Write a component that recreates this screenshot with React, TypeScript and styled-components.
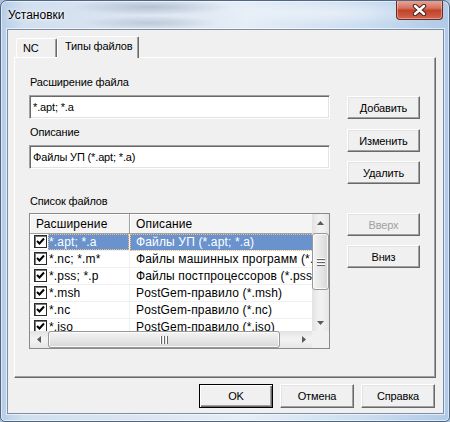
import styled, { createGlobalStyle } from "styled-components";

const GlobalStyle = createGlobalStyle`
  html, body {
    margin: 0;
    padding: 0;
    background: #a9c0da;
  }
  * {
    box-sizing: border-box;
  }
`;

const Window = styled.div`
  width: 450px;
  height: 422px;
  display: flex;
  flex-direction: column;
  border: 1px solid #4d6784;
  border-radius: 7px 7px 5px 5px;
  background:
    radial-gradient(ellipse 80px 8px at 150px 6px, rgba(80, 100, 130, 0.28), transparent),
    radial-gradient(ellipse 70px 7px at 150px 22px, rgba(80, 100, 130, 0.22), transparent),
    radial-gradient(ellipse 120px 12px at 330px 12px, rgba(255, 255, 255, 0.45), transparent),
    linear-gradient(90deg, #b6cde7 0%, #d1dfef 5%, #dbe5f1 30%, #e5edf6 55%, #cddef0 80%, #b0cae7 100%);
  box-shadow: inset 0 0 0 1px rgba(255, 255, 255, 0.55);
  font-family: "Liberation Sans", Arial, sans-serif;
  font-size: 11px;
  letter-spacing: -0.15px;
  color: #000;
  overflow: hidden;
`;

const TitleBar = styled.div`
  height: 28px;
  display: flex;
  align-items: center;
  padding-left: 7px;
`;

const Title = styled.span`
  flex: 1;
  font-size: 12px;
  letter-spacing: 0;
  text-shadow: 0 0 6px #fff, 0 0 3px #fff;
`;

const CloseButton = styled.div`
  align-self: flex-start;
  margin-top: -1px;
  margin-right: 6px;
  width: 47px;
  height: 20px;
  border: 1px solid #6e2a20;
  border-top: none;
  border-radius: 0 0 4px 4px;
  background: linear-gradient(#eaaa9b 0%, #d8735f 42%, #c2412b 55%, #cf6850 100%);
  box-shadow: inset 0 0 0 1px rgba(255, 255, 255, 0.35);
  display: flex;
  align-items: center;
  justify-content: center;
`;

const Client = styled.div`
  flex: 1;
  margin: 0 5px 7px 6px;
  border: 1px solid #7b8ea6;
  box-shadow: 0 0 0 1px rgba(255, 255, 255, 0.6);
  background: #f0f0f0;
  display: flex;
  flex-direction: column;
  padding: 6px 7px 5px 6px;
`;

const TabStrip = styled.div`
  height: 21px;
  display: flex;
  align-items: flex-end;
  padding-left: 2px;
  position: relative;
  z-index: 1;
`;

const Tab = styled.div<{ $active?: boolean }>`
  width: ${(p) => (p.$active ? "82px" : "41px")};
  height: ${(p) => (p.$active ? "22px" : "19px")};
  margin-bottom: ${(p) => (p.$active ? "-1px" : "0")};
  padding-left: ${(p) => (p.$active ? "7px" : "6px")};
  padding-top: 3px;
  background: #f0f0f0;
  border: 1px solid;
  border-bottom: none;
  border-color: #fff #696969 transparent #fff;
  border-radius: 2px 2px 0 0;
  box-shadow: inset -1px 0 0 #a0a0a0;
  line-height: 13px;
`;

const Panel = styled.div`
  height: 321px;
  border: 1px solid;
  border-color: #fff #696969 #696969 #fff;
  box-shadow: inset -1px -1px 0 #a0a0a0;
  display: flex;
  gap: 17px;
  padding-left: 14px;
`;

const LeftColumn = styled.div`
  width: 301px;
  display: flex;
  flex-direction: column;
  padding-top: 18px;
`;

const RightColumn = styled.div`
  width: 73px;
  display: flex;
  flex-direction: column;
  padding-top: 38px;
`;

const Label = styled.div<{ $mt?: number }>`
  margin-top: ${(p) => p.$mt ?? 0}px;
  line-height: 13px;
  padding-left: 1px;
`;

const Field = styled.div`
  margin-top: 6px;
  height: 24px;
  background: #fff;
  border: 1px solid;
  border-color: #a0a0a0 #fff #fff #a0a0a0;
  box-shadow: inset 1px 1px 0 #696969, inset -1px -1px 0 #e3e3e3;
  display: flex;
  align-items: center;
  padding-left: 3px;
`;

const Button = styled.div<{ $mt?: number; $w?: number; $h?: number; $default?: boolean; $disabled?: boolean }>`
  margin-top: ${(p) => p.$mt ?? 0}px;
  width: ${(p) => p.$w ?? 73}px;
  height: ${(p) => p.$h ?? 23}px;
  display: flex;
  align-items: center;
  justify-content: center;
  background: #f0f0f0;
  color: ${(p) => (p.$disabled ? "#a0a0a0" : "#000")};
  border: 1px solid;
  border-color: ${(p) => (p.$default ? "#000" : "#fff #696969 #696969 #fff")};
  box-shadow: ${(p) =>
    p.$default
      ? "inset 1px 1px 0 #fff, inset -1px -1px 0 #696969, inset -2px -2px 0 #a0a0a0"
      : "inset -1px -1px 0 #a0a0a0, inset 1px 1px 0 #e3e3e3"};
`;

const ListBox = styled.div`
  margin-top: 5px;
  height: 136px;
  border: 1px solid #8a8a8a;
  background: #fff;
  display: grid;
  grid-template-columns: 1fr 17px;
  grid-template-rows: 1fr 17px;
  font-size: 12px;
  letter-spacing: 0.15px;
`;

const ListView = styled.div`
  overflow: hidden;
`;

const HeaderRow = styled.div`
  display: flex;
  height: 20px;
  width: 400px;
`;

const HeaderCell = styled.div<{ $w: number }>`
  width: ${(p) => p.$w}px;
  flex: none;
  display: flex;
  align-items: center;
  padding-left: 6px;
  background: #f4f4f4;
  border-right: 1px solid #a0a0a0;
  border-bottom: 1px solid #a0a0a0;
  box-shadow: inset 1px 1px 0 #fff;
`;

const Row = styled.div`
  display: flex;
  height: 17px;
  width: 400px;
`;

const NameCell = styled.div`
  width: 100px;
  flex: none;
  display: flex;
  align-items: stretch;
  padding-left: 4px;
  border-right: 1px solid #f0f0f0;
  border-bottom: 1px solid #f0f0f0;
`;

const CheckBox = styled.div`
  width: 13px;
  height: 13px;
  margin: 1px 1px 0 0;
  flex: none;
  background: #fff;
  border: 1px solid #2a2a2a;
  box-shadow: inset 1px 1px 0 #7a7a7a;
  display: flex;
  align-items: center;
  justify-content: center;
`;

const NameText = styled.div<{ $selected?: boolean }>`
  flex: 1;
  padding-left: 1px;
  line-height: 16px;
  white-space: nowrap;
  overflow: hidden;
  background: ${(p) => (p.$selected ? "#6a93cd" : "transparent")};
  color: ${(p) => (p.$selected ? "#fff" : "#000")};
  outline: ${(p) => (p.$selected ? "1px dotted #f0c080" : "none")};
  outline-offset: -1px;
`;

const DescCell = styled.div<{ $selected?: boolean }>`
  width: 260px;
  flex: none;
  padding-left: 6px;
  line-height: 16px;
  white-space: nowrap;
  overflow: hidden;
  border-bottom: 1px solid #f0f0f0;
  background: ${(p) => (p.$selected ? "#6a93cd" : "transparent")};
  color: ${(p) => (p.$selected ? "#fff" : "#000")};
  outline: ${(p) => (p.$selected ? "1px dotted #f0c080" : "none")};
  outline-offset: -1px;
`;

const VScroll = styled.div`
  display: flex;
  flex-direction: column;
  background: linear-gradient(90deg, #e2e2e2, #f1f1f1 40%, #f1f1f1 60%, #e6e6e6);
`;

const HScroll = styled.div`
  display: flex;
  background: linear-gradient(#e2e2e2, #f1f1f1 40%, #f1f1f1 60%, #e6e6e6);
`;

const Arrow = styled.div`
  width: 17px;
  height: 17px;
  flex: none;
  display: flex;
  align-items: center;
  justify-content: center;
`;

const Track = styled.div<{ $vertical?: boolean }>`
  flex: 1;
  display: flex;
  flex-direction: ${(p) => (p.$vertical ? "column" : "row")};
  padding: ${(p) => (p.$vertical ? "2px 0 0 0" : "0 0 0 1px")};
`;

const Thumb = styled.div<{ $vertical?: boolean; $size: number }>`
  ${(p) => (p.$vertical ? `height: ${p.$size}px; width: 17px;` : `width: ${p.$size}px; height: 17px;`)}
  border: 1px solid #979797;
  border-radius: 3px;
  background: ${(p) =>
    p.$vertical
      ? "linear-gradient(90deg, #f3f3f3, #e7e7e7 50%, #d6d6d6)"
      : "linear-gradient(#f3f3f3, #e7e7e7 50%, #d6d6d6)"};
  box-shadow: inset 0 0 0 1px rgba(255, 255, 255, 0.8);
  display: flex;
  align-items: center;
  justify-content: center;
`;

const Corner = styled.div`
  background: #f0f0f0;
`;

const Footer = styled.div`
  margin-top: 6px;
  display: flex;
  justify-content: flex-end;
  gap: 7px;
  padding-right: 1px;
`;

const Tri = ({ dir }: { dir: "up" | "down" | "left" | "right" }) => {
  const pts = {
    up: "1,5 4.5,1 8,5",
    down: "1,1 4.5,5 8,1",
    left: "5,1 1,4.5 5,8",
    right: "1,1 5,4.5 1,8",
  }[dir];
  const vertical = dir === "up" || dir === "down";
  return (
    <svg width={vertical ? 9 : 6} height={vertical ? 6 : 9}>
      <polygon points={pts} fill="#5a5a5a" />
    </svg>
  );
};

const Grip = ({ vertical }: { vertical?: boolean }) =>
  vertical ? (
    <svg width="8" height="8">
      {[1, 4, 7].map((y) => (
        <g key={y}>
          <rect x="0" y={y - 1} width="8" height="1" fill="#fff" />
          <rect x="0" y={y} width="8" height="1" fill="#666" />
        </g>
      ))}
    </svg>
  ) : (
    <svg width="8" height="8">
      {[1, 4, 7].map((x) => (
        <g key={x}>
          <rect x={x - 1} y="0" width="1" height="8" fill="#fff" />
          <rect x={x} y="0" width="1" height="8" fill="#666" />
        </g>
      ))}
    </svg>
  );

const Check = () => (
  <svg width="9" height="9" viewBox="0 0 9 9">
    <polyline points="1,4 3.5,6.5 8,1.5" fill="none" stroke="#000" strokeWidth="2" />
  </svg>
);

const rows = [
  { ext: "*.apt; *.a", desc: "Файлы УП (*.apt; *.a)" },
  { ext: "*.nc; *.m*", desc: "Файлы машинных программ (*.nc; *.m*)" },
  { ext: "*.pss; *.p", desc: "Файлы постпроцессоров (*.pss; *.p)" },
  { ext: "*.msh", desc: "PostGem-правило (*.msh)" },
  { ext: "*.nc", desc: "PostGem-правило (*.nc)" },
  { ext: "*.iso", desc: "PostGem-правило (*.iso)" },
];

const App = () => {
  return (
    <>
      <GlobalStyle />
      <Window>
        <TitleBar>
          <Title>Установки</Title>
          <CloseButton>
            <svg width="15" height="12" viewBox="0 0 15 12">
              <path d="M3 2 L12 10 M12 2 L3 10" stroke="#4a2420" strokeWidth="4.4" strokeLinecap="round" />
              <path d="M3 2 L12 10 M12 2 L3 10" stroke="#fff" strokeWidth="2.4" strokeLinecap="round" />
            </svg>
          </CloseButton>
        </TitleBar>
        <Client>
          <TabStrip>
            <Tab>NC</Tab>
            <Tab $active>Типы файлов</Tab>
          </TabStrip>
          <Panel>
            <LeftColumn>
              <Label>Расширение файла</Label>
              <Field>*.apt; *.a</Field>
              <Label $mt={7}>Описание</Label>
              <Field>Файлы УП (*.apt; *.a)</Field>
              <Label $mt={26}>Список файлов</Label>
              <ListBox>
                <ListView>
                  <HeaderRow>
                    <HeaderCell $w={100}>Расширение</HeaderCell>
                    <HeaderCell $w={300}>Описание</HeaderCell>
                  </HeaderRow>
                  {rows.map((r, i) => (
                    <Row key={r.ext}>
                      <NameCell>
                        <CheckBox>
                          <Check />
                        </CheckBox>
                        <NameText $selected={i === 0}>{r.ext}</NameText>
                      </NameCell>
                      <DescCell $selected={i === 0}>{r.desc}</DescCell>
                    </Row>
                  ))}
                </ListView>
                <VScroll>
                  <Arrow>
                    <Tri dir="up" />
                  </Arrow>
                  <Track $vertical>
                    <Thumb $vertical $size={57}>
                      <Grip vertical />
                    </Thumb>
                  </Track>
                  <Arrow>
                    <Tri dir="down" />
                  </Arrow>
                </VScroll>
                <HScroll>
                  <Arrow>
                    <Tri dir="left" />
                  </Arrow>
                  <Track>
                    <Thumb $size={232}>
                      <Grip />
                    </Thumb>
                  </Track>
                  <Arrow>
                    <Tri dir="right" />
                  </Arrow>
                </HScroll>
                <Corner />
              </ListBox>
            </LeftColumn>
            <RightColumn>
              <Button>Добавить</Button>
              <Button $mt={10}>Изменить</Button>
              <Button $mt={9}>Удалить</Button>
              <Button $mt={29} $disabled>
                Вверх
              </Button>
              <Button $mt={9}>Вниз</Button>
            </RightColumn>
          </Panel>
          <Footer>
            <Button $w={74} $h={24} $default>
              OK
            </Button>
            <Button $w={74} $h={24}>
              Отмена
            </Button>
            <Button $w={74} $h={24}>
              Справка
            </Button>
          </Footer>
        </Client>
      </Window>
    </>
  );
};

export default App;
